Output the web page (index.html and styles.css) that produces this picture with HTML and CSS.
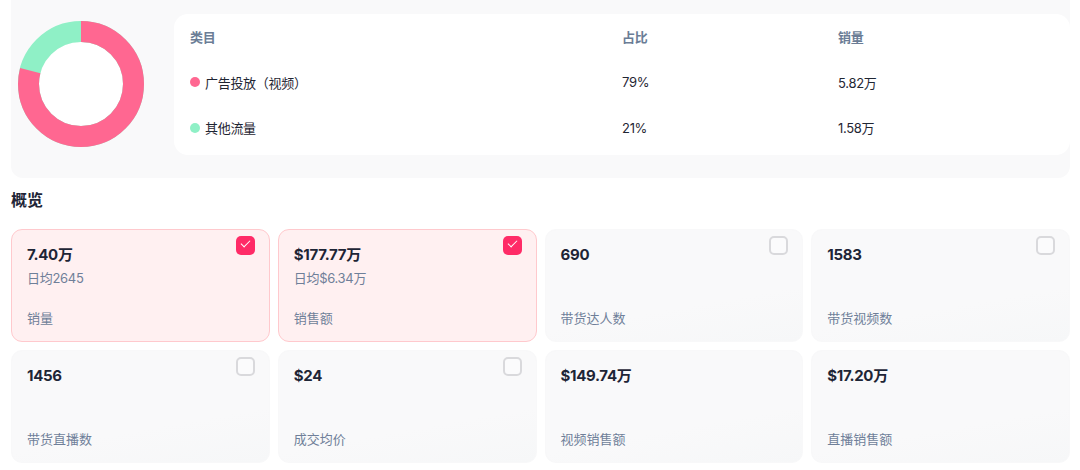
FILE: index.html
```html
<!DOCTYPE html>
<html lang="zh-CN">
<head>
    <meta charset="UTF-8">
    <title>流量来源 - 概览</title>
    <link rel="stylesheet" href="styles.css">
</head>
<body>
    <div class="page">
        <div class="source-panel">
            <div class="donut">
                <svg width="126" height="126" viewBox="0 0 126 126">
                    <circle cx="63" cy="63" r="42" fill="#fff"/>
                    <circle cx="63" cy="63" r="52.5" fill="none" stroke="#8ff0c6" stroke-width="21"/>
                    <circle cx="63" cy="63" r="52.5" fill="none" stroke="#ff6791" stroke-width="21"
                        stroke-dasharray="260.6 329.9" transform="rotate(-90 63 63)"/>
                </svg>
            </div>
            <div class="source-table">
                <div class="row head">
                    <span>类目</span>
                    <span>占比</span>
                    <span>销量</span>
                </div>
                <div class="row">
                    <span class="name"><i class="dot pink"></i>广告投放（视频）</span>
                    <span>79%</span>
                    <span>5.82万</span>
                </div>
                <div class="row">
                    <span class="name"><i class="dot green"></i>其他流量</span>
                    <span>21%</span>
                    <span>1.58万</span>
                </div>
            </div>
        </div>

        <h2 class="section-title">概览</h2>

        <div class="stats">
            <div class="stat checked">
                <span class="check"></span>
                <div class="value">7.40万</div>
                <div class="avg">日均2645</div>
                <div class="label">销量</div>
            </div>
            <div class="stat checked">
                <span class="check"></span>
                <div class="value">$177.77万</div>
                <div class="avg">日均$6.34万</div>
                <div class="label">销售额</div>
            </div>
            <div class="stat">
                <span class="check"></span>
                <div class="value">690</div>
                <div class="label">带货达人数</div>
            </div>
            <div class="stat">
                <span class="check"></span>
                <div class="value">1583</div>
                <div class="label">带货视频数</div>
            </div>
            <div class="stat">
                <span class="check"></span>
                <div class="value">1456</div>
                <div class="label">带货直播数</div>
            </div>
            <div class="stat">
                <span class="check"></span>
                <div class="value">$24</div>
                <div class="label">成交均价</div>
            </div>
            <div class="stat">
                <div class="value">$149.74万</div>
                <div class="label">视频销售额</div>
            </div>
            <div class="stat">
                <div class="value">$17.20万</div>
                <div class="label">直播销售额</div>
            </div>
        </div>
    </div>
</body>
</html>
```

FILE: styles.css
```css
body {
    margin: 0;
    background: #fff;
    font-family: Inter, "Noto Sans CJK SC", sans-serif;
    color: #1e2536;
}
.page {
    padding: 0 10px 0 11px;
}
.source-panel {
    display: flex;
    align-items: center;
    gap: 30px;
    background: #f9f9fa;
    border-radius: 0 0 12px 12px;
    padding: 14px 0 23px 7px;
}
.donut {
    width: 126px;
    height: 126px;
    flex: none;
}
.donut svg {
    display: block;
}
.source-table {
    flex: 1;
    background: #fff;
    border-radius: 14px;
    padding: 0 16px 4px;
}
.row {
    display: grid;
    grid-template-columns: 432px 216px 1fr;
    height: 45.5px;
    align-items: center;
    font-size: 13px;
    letter-spacing: -0.3px;
    color: #1f2633;
}
.row.head {
    font-weight: 600;
    color: #6b7d96;
}
.name {
    display: flex;
    align-items: center;
    gap: 5px;
}
.dot {
    width: 10px;
    height: 10px;
    border-radius: 50%;
}
.dot.pink { background: #ff6791; }
.dot.green { background: #8ff0c6; }
.section-title {
    margin: 11px 0 18px;
    font-size: 16px;
    line-height: 22px;
    font-weight: 700;
    color: #1e2536;
}
.stats {
    display: grid;
    grid-template-columns: repeat(4, 1fr);
    gap: 8px;
}
.stat {
    position: relative;
    height: 113px;
    box-sizing: border-box;
    display: flex;
    flex-direction: column;
    padding: 14px 15px 13px;
    background: linear-gradient(170deg, #f9f9fa 65%, #f6f7f8);
    border: 1px solid #f8f8f9;
    border-radius: 11px;
}
.stat.checked {
    background: #fff0f1;
    border-color: #ffc9cd;
}
.value {
    font-size: 15px;
    line-height: 22px;
    font-weight: 700;
    letter-spacing: -0.3px;
    color: #1e2536;
}
.avg {
    margin-top: 2px;
    font-size: 13px;
    line-height: 20px;
    letter-spacing: -0.3px;
    color: #6f7f99;
}
.label {
    margin-top: auto;
    font-size: 13px;
    line-height: 20px;
    color: #6f7f99;
}
.check {
    position: absolute;
    top: 6px;
    right: 14px;
    width: 19px;
    height: 19px;
    box-sizing: border-box;
    border: 2px solid #d9d9dc;
    border-radius: 5px;
    background: #fbfbfc;
}
.checked .check {
    border: none;
    background: #ff2b67;
}
.checked .check::after {
    content: '';
    position: absolute;
    left: 5px;
    top: 4px;
    width: 8px;
    height: 4px;
    border-left: 1.8px solid #fff;
    border-bottom: 1.8px solid #fff;
    transform: rotate(-45deg);
}
```
